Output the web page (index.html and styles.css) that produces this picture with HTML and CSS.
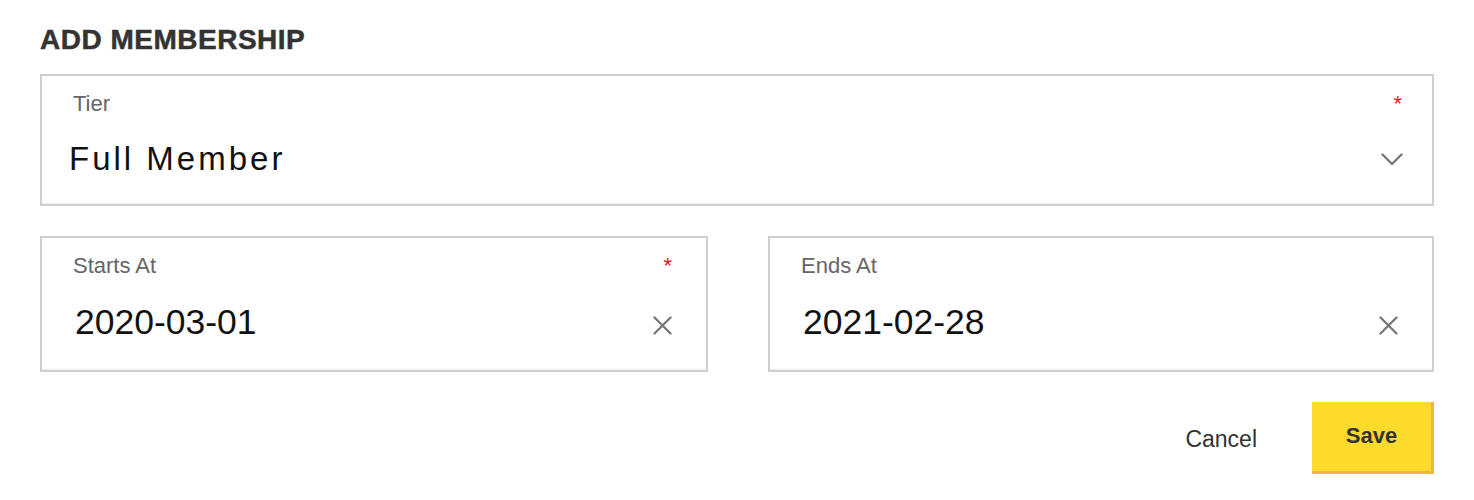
FILE: index.html
```html
<!DOCTYPE html>
<html lang="en">
<head>
<meta charset="utf-8">
<title>Add Membership</title>
<link rel="stylesheet" href="styles.css">
</head>
<body>
<div class="page">
  <h1 class="title">ADD MEMBERSHIP</h1>

  <div class="field field-select">
    <div class="field-head">
      <span class="field-label">Tier</span>
      <span class="required">*</span>
    </div>
    <div class="field-row">
      <span class="field-value value-select">Full Member</span>
      <svg class="chevron" width="22" height="13" viewBox="0 0 22 13" aria-hidden="true">
        <polyline points="1.5,1.5 11,11 20.5,1.5" fill="none" stroke="#777" stroke-width="2.4" stroke-linecap="round" stroke-linejoin="round"/>
      </svg>
    </div>
  </div>

  <div class="date-grid">
    <div class="field field-date">
      <div class="field-head">
        <span class="field-label">Starts At</span>
        <span class="required">*</span>
      </div>
      <div class="field-row">
        <span class="field-value value-date">2020-03-01</span>
        <svg class="clear" width="19" height="19" viewBox="0 0 19 19" aria-hidden="true">
          <path d="M1.5 1.5 L17.5 17.5 M17.5 1.5 L1.5 17.5" fill="none" stroke="#777" stroke-width="2.3" stroke-linecap="round"/>
        </svg>
      </div>
    </div>
    <div class="field field-date">
      <div class="field-head">
        <span class="field-label">Ends At</span>
      </div>
      <div class="field-row">
        <span class="field-value value-date">2021-02-28</span>
        <svg class="clear" width="19" height="19" viewBox="0 0 19 19" aria-hidden="true">
          <path d="M1.5 1.5 L17.5 17.5 M17.5 1.5 L1.5 17.5" fill="none" stroke="#777" stroke-width="2.3" stroke-linecap="round"/>
        </svg>
      </div>
    </div>
  </div>

  <div class="actions">
    <button class="btn-cancel" type="button">Cancel</button>
    <button class="btn-save" type="button">Save</button>
  </div>
</div>
</body>
</html>
```

FILE: styles.css
```css
* { box-sizing: border-box; }

html, body {
  margin: 0;
  padding: 0;
  background: #ffffff;
}

body {
  font-family: "Liberation Sans", Arial, sans-serif;
  color: #333;
}

.page {
  padding: 25px 40px 0 40px;
}

.title {
  margin: 0 0 19px 0;
  font-size: 28px;
  line-height: 30px;
  font-weight: 700;
  letter-spacing: 0.5px;
  color: #333;
  -webkit-text-stroke: 0.5px #333;
}

.field {
  border: 2px solid #cfcfcf;
  background: #fff;
  box-shadow: inset 0 -3px 2px -2px rgba(0, 0, 0, 0.07);
}

.field-select {
  padding: 15px 30px 25px 31px;
}

.field-date {
  padding: 15px 34px 28px 31px;
}

.field-head {
  display: flex;
  justify-content: space-between;
  align-items: flex-start;
}

.field-label {
  font-size: 22px;
  line-height: 26px;
  color: #666;
}

.required {
  font-size: 22px;
  line-height: 26px;
  color: #e8151b;
}

.field-row {
  display: flex;
  justify-content: space-between;
  align-items: center;
}

.field-select .field-row {
  margin-top: 22px;
}

.field-date .field-row {
  margin-top: 23px;
}

.field-value {
  color: #111;
}

.value-select {
  font-size: 33px;
  line-height: 40px;
  letter-spacing: 3px;
  margin-left: -4px;
}

.value-date {
  font-size: 35.5px;
  line-height: 40px;
  margin-left: 2px;
}

.chevron {
  display: block;
  margin-right: -1px;
}

.clear {
  display: block;
  margin-top: 7px;
}

.date-grid {
  display: grid;
  grid-template-columns: 668px 1fr;
  column-gap: 60px;
  margin-top: 30px;
}

.actions {
  display: flex;
  justify-content: flex-end;
  align-items: center;
  gap: 55px;
  margin-top: 30px;
}

.btn-cancel {
  border: 0;
  background: transparent;
  padding: 0;
  font-family: inherit;
  font-size: 23px;
  line-height: 28px;
  color: #333;
  margin-top: 2px;
}

.btn-save {
  width: 122px;
  height: 72px;
  border: 0;
  border-right: 3px solid #ebb940;
  border-bottom: 3px solid #ebb940;
  background: #fddb2c;
  font-family: inherit;
  font-size: 22px;
  font-weight: 700;
  color: #333;
  padding: 0;
  padding-bottom: 1px;
}
```
